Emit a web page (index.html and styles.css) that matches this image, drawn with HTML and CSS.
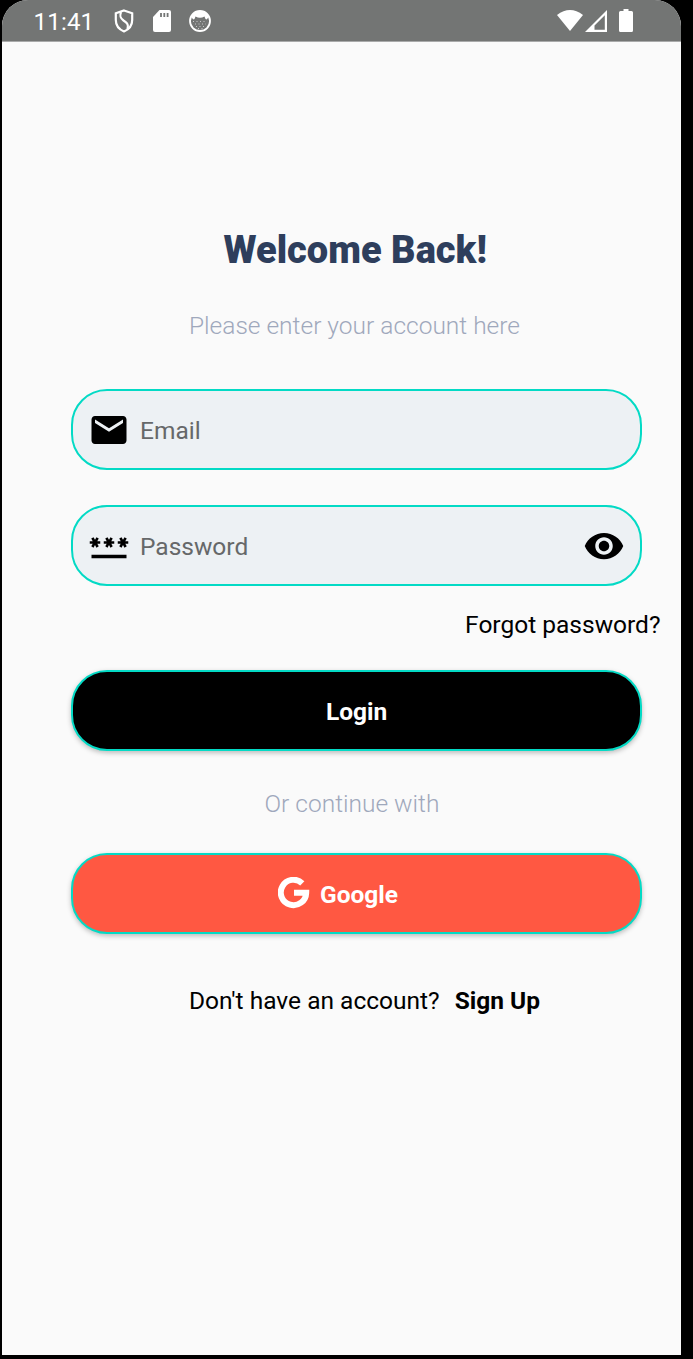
FILE: index.html
```html
<!DOCTYPE html>
<html lang="en">
<head>
<meta charset="utf-8">
<title>Login</title>
<link rel="stylesheet" href="styles.css">
</head>
<body>
<div class="phone">
  <header class="status">
    <span class="clock">11:41</span>
    <svg class="shield" width="20" height="24" viewBox="0 0 20 24" fill="none" stroke="#fff" stroke-width="2.2"><path d="M10 1.500 18.200 4.300V11C18.200 16.500 14.700 20.500 10 22.400 5.300 20.500 1.800 16.500 1.800 11V4.300Z"/><path d="M7 3C5.500 7 6 9 9.500 11.500 14 14.500 14.500 16 13.500 20"/></svg>
    <svg class="sd" width="18" height="22" viewBox="0 0 18 22"><path fill="#fff" d="M6.500 0H16Q18 0 18 2V20Q18 22 16 22H2Q0 22 0 20V7Z"/><path stroke="#737574" stroke-width="1.800" d="M8 3V7M11.300 3V7M14.600 3V7"/></svg>
    <svg class="cat" width="22" height="22" viewBox="0 0 22 22"><circle cx="11" cy="11" r="10" fill="#737574" stroke="#fff" stroke-width="1.800"/><path fill="#fff" d="M2 7Q5 1 11 1T20 7L17.500 9.500 16.500 9 15.500 6.500Q11 9 6.500 6.500L5.500 9 4.500 9.500Z"/><path stroke="#fff" stroke-width="1" stroke-dasharray="1 2.500" opacity=".6" d="M4 11.500H18M6 14H17M7 16.500H15M9 18.500H14"/></svg>
    <svg class="wifi" width="26" height="21" viewBox="0 0 26 21"><path fill="#fff" d="M0 5Q13-5 26 5L13 21Z"/></svg>
    <svg class="cell" width="22" height="22" viewBox="0 0 22 22"><path fill="#fff" fill-rule="evenodd" d="M22 0V22H0ZM19.800 5.300 9.500 15.500V19.800H19.800Z"/></svg>
    <svg class="battery" width="14" height="23" viewBox="0 0 14 23"><path fill="#fff" d="M4.500 0H9.500V2H12.500Q14 2 14 3.500V21.500Q14 23 12.500 23H1.500Q0 23 0 21.500V3.500Q0 2 1.500 2H4.500Z"/></svg>
  </header>
  <main class="content">
    <h1 class="title">Welcome Back!</h1>
    <p class="muted subtitle">Please enter your account here</p>
    <div class="box field">
      <svg class="lead mail" width="42" height="42" viewBox="0 0 24 24"><path d="M20 4H4c-1.100 0-1.990.9-1.990 2L2 18c0 1.100.9 2 2 2h16c1.100 0 2-.9 2-2V6c0-1.100-.9-2-2-2zm0 4-8 5-8-5V6l8 5 8-5v2z"/></svg>
      <span class="hint">Email</span>
    </div>
    <div class="box field password">
      <svg class="lead" width="42" height="42" viewBox="0 0 24 24"><path d="M2 17h20v2H2v-2zm1.150-4.050L4 11.470l.85 1.480 1.300-.75-.85-1.480H7v-1.500H5.300l.85-1.470L4.850 7 4 8.470 3.150 7l-1.300.75.85 1.470H1v1.500h1.700l-.85 1.480 1.300.75zm6.700-.75 1.300.75.850-1.480.850 1.480 1.300-.75-.85-1.480H15v-1.500h-1.700l.85-1.470-1.300-.75L12 8.470 11.150 7l-1.300.75.85 1.470H9v1.500h1.700l-.85 1.480zM23 9.220h-1.700l.85-1.470-1.300-.75L20 8.470 19.150 7l-1.300.75.850 1.470H17v1.500h1.700l-.85 1.480 1.300.75.850-1.480.850 1.480 1.300-.75-.85-1.480H23v-1.500z"/></svg>
      <span class="hint">Password</span>
      <svg class="eye" width="42" height="42" viewBox="0 0 24 24"><path d="M12 4.500C7 4.500 2.730 7.610 1 12c1.730 4.390 6 7.500 11 7.500s9.270-3.110 11-7.500c-1.730-4.390-6-7.500-11-7.500zM12 17c-2.760 0-5-2.240-5-5s2.240-5 5-5 5 2.240 5 5-2.240 5-5 5zm0-8c-1.660 0-3 1.340-3 3s1.340 3 3 3 3-1.340 3-3-1.340-3-3-3z"/></svg>
    </div>
    <a class="forgot">Forgot password?</a>
    <div class="box button login"><span class="login-label">Login</span></div>
    <p class="muted or">Or continue with</p>
    <div class="box button google">
      <svg width="32" height="32" viewBox="0 0 32 32"><path fill="none" stroke="#fff" stroke-width="6" d="M24.300 6.300A12.700 12.700 0 1 0 28.200 15.800H16"/></svg>
      <span class="google-label">Google</span>
    </div>
    <p class="signup"><span class="ask">Don't have an account?</span><b>Sign Up</b></p>
  </main>
</div>
</body>
</html>
```
FILE: styles.css
```css
* { box-sizing: border-box; }
body { margin: 0; background: #000; font-family: Roboto, sans-serif; font-size: 24.5px; line-height: 28px; color: #000; }
.phone { width: 679px; height: 1355px; margin-left: 2px; background: #fafafa; border-radius: 26px 26px 0 0; overflow: hidden; box-shadow: 0 1px 0 #777; }
.status { height: 42px; display: flex; align-items: flex-start; padding: 0 48px 0 31.5px; background: #737574; border-bottom: 1px solid #a9aaaa; color: #fff; }
.status svg { flex: none; }
.clock { width: 80px; padding-top: 8px; font-size: 24px; letter-spacing: 0.2px; }
.shield { margin-top: 9px; }
.sd { margin: 10px 0 0 19px; }
.cat { margin: 10px 0 0 18.500px; }
.wifi { margin: 10px 0 0 auto; }
.cell { margin: 10px 0 0 2px; }
.battery { margin: 9px 0 0 12px; }
.content { display: flex; flex-direction: column; padding: 185px 39px 0 69px; white-space: nowrap; }
.title { margin: 1px 0 0 152.500px; font-size: 38px; line-height: 44px; font-weight: 900; color: #2e3e5c; }
.muted { margin: 0; font-weight: 300; color: #9fa8bc; }
.subtitle { margin: 40px 0 0 118px; }
.box { display: flex; align-items: center; height: 81px; border: 2px solid #03dac5; border-radius: 36px; }
.field { margin-top: 49.4px; padding: 0 15px; background: #edf1f4; color: #666869; }
.password { margin-top: 35px; }
.hint { margin: 3px auto 0 10px; }
.forgot { align-self: flex-end; margin: 25.1px -18.500px 0 0; }
.button { color: #fff; font-weight: 700; box-shadow: 0 2px 5px rgba(0,0,0,.25); }
.login { margin-top: 30.5px; background: #000; padding-left: 253px; }
.login-label { margin-top: 3px; }
.or { margin: 39px 0 0 193.5px; }
.google { margin-top: 35px; padding-left: 205px; background: #ff5842; }
.google-label { margin: 3px 0 0 10px; }
.signup { display: flex; gap: 15px; margin: 53px 0 0 118px; }
```
